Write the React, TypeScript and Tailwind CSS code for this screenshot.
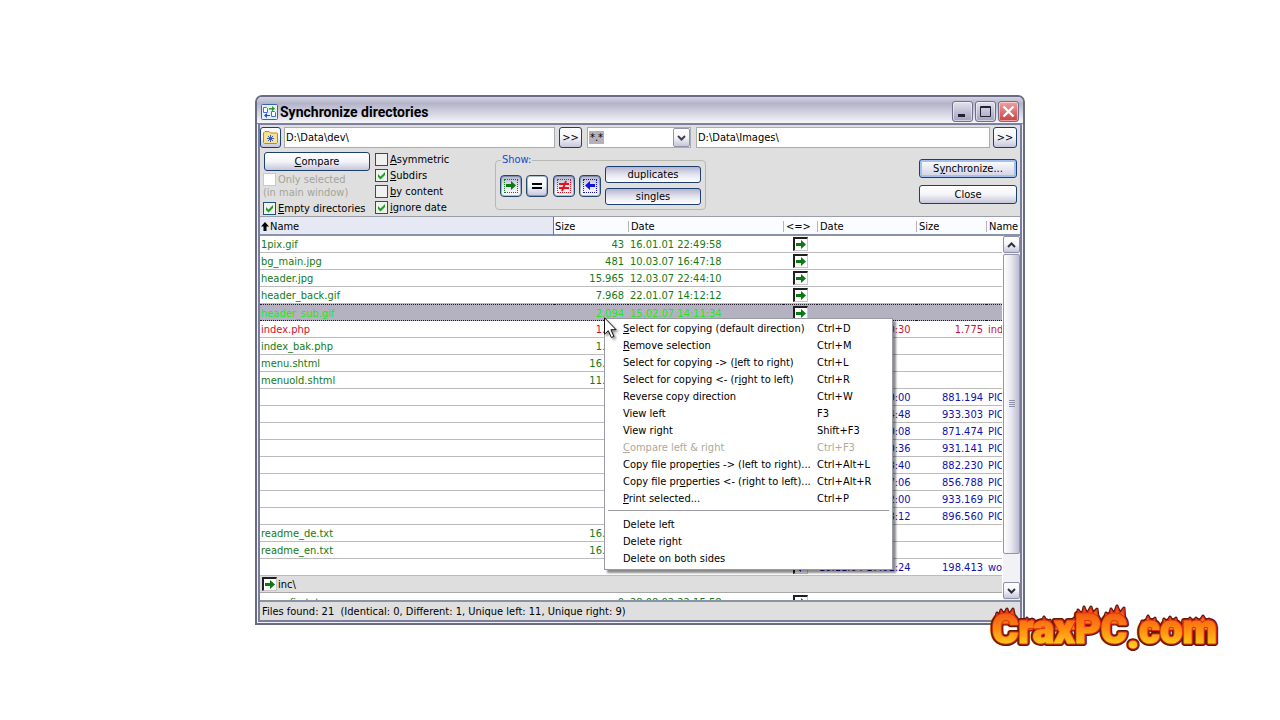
import type { ReactNode } from "react";

type Tone = "left" | "right" | "diff";

interface Entry {
  name?: string;
  size?: string;
  date?: string;
  dir?: "left" | "right" | "differs";
  rDate?: string;
  rSize?: string;
  rName?: string;
  tone: Tone;
  selected?: boolean;
}

const entries: Entry[] = [
  { name: "1pix.gif", size: "43", date: "16.01.01 22:49:58", dir: "right", tone: "left" },
  { name: "bg_main.jpg", size: "481", date: "10.03.07 16:47:18", dir: "right", tone: "left" },
  { name: "header.jpg", size: "15.965", date: "12.03.07 22:44:10", dir: "right", tone: "left" },
  { name: "header_back.gif", size: "7.968", date: "22.01.07 14:12:12", dir: "right", tone: "left" },
  { name: "header_sub.gif", size: "2.094", date: "15.02.07 14:11:34", dir: "right", tone: "left", selected: true },
  { name: "index.php", size: "1.775", date: "12.03.07 22:50:10", dir: "differs", rDate: "12.03.07 22:40:30", rSize: "1.775", rName: "index.php", tone: "diff" },
  { name: "index_bak.php", size: "1.775", date: "12.03.07 22:50:10", dir: "right", tone: "left" },
  { name: "menu.shtml", size: "16.210", date: "12.03.07 22:50:10", dir: "right", tone: "left" },
  { name: "menuold.shtml", size: "11.342", date: "12.03.07 22:50:10", dir: "right", tone: "left" },
  { dir: "left", rDate: "18.11.04 17:20:00", rSize: "881.194", rName: "PICT0001.jpg", tone: "right" },
  { dir: "left", rDate: "18.11.04 17:24:48", rSize: "933.303", rName: "PICT0002.jpg", tone: "right" },
  { dir: "left", rDate: "18.11.04 17:20:08", rSize: "871.474", rName: "PICT0003.jpg", tone: "right" },
  { dir: "left", rDate: "18.11.04 17:20:36", rSize: "931.141", rName: "PICT0004.jpg", tone: "right" },
  { dir: "left", rDate: "18.11.04 17:23:40", rSize: "882.230", rName: "PICT0005.jpg", tone: "right" },
  { dir: "left", rDate: "18.11.04 17:27:06", rSize: "856.788", rName: "PICT0006.jpg", tone: "right" },
  { dir: "left", rDate: "18.11.04 17:22:00", rSize: "933.169", rName: "PICT0007.jpg", tone: "right" },
  { dir: "left", rDate: "18.11.04 17:23:12", rSize: "896.560", rName: "PICT0008.jpg", tone: "right" },
  { name: "readme_de.txt", size: "16.004", date: "12.03.07 22:50:10", dir: "right", tone: "left" },
  { name: "readme_en.txt", size: "16.004", date: "12.03.07 22:50:10", dir: "right", tone: "left" },
  { dir: "left", rDate: "18.11.04 17:01:24", rSize: "198.413", rName: "world.jpg", tone: "right" },
];

const toneClass: Record<Tone, string> = {
  left: "text-[#157a15]",
  right: "text-[#1010b0]",
  diff: "text-[#d01030]",
};

function Arrow({ color, flip }: { color: string; flip?: boolean }) {
  return (
    <svg viewBox="0 0 12 9" className="h-[9px] w-[12px]">
      {flip ? <path d="M11 3H6V0L1 4.500 6 9V6h5z" fill={color} /> : <path d="M1 3h5V0l5 4.500L6 9V6H1z" fill={color} />}
    </svg>
  );
}

function DirectionBox({ dir }: { dir: "left" | "right" | "differs" }) {
  return (
    <span className="flex h-[14px] w-[15px] items-center justify-center border border-t-2 border-l-2 border-[#c8c8c8] border-t-[#202020] border-l-[#202020] bg-white">
      {dir === "right" && <Arrow color="#0a7a12" />}
      {dir === "left" && <Arrow color="#1414e0" flip />}
      {dir === "differs" && <NotEqual />}
    </span>
  );
}

function NotEqual() {
  return (
    <svg viewBox="0 0 12 12" className="h-[12px] w-[12px]">
      <path d="M1 4h10M1 8h10M8 1 4 11" stroke="#e8101c" strokeWidth="2" fill="none" />
    </svg>
  );
}

function Check({ label, hot, checked, disabled }: { label: string; hot?: string; checked?: boolean; disabled?: boolean }) {
  return (
    <label className={disabled ? "flex h-4 items-center gap-[2px] text-[#a5a597]" : "flex h-4 items-center gap-[2px]"}>
      <span className="grid h-[13px] w-[13px] place-items-center">
        <input
          type="checkbox"
          defaultChecked={checked}
          disabled={disabled}
          className="peer col-start-1 row-start-1 h-[13px] w-[13px] appearance-none border border-[#1c5180] bg-[#f1f1f1] disabled:border-[#cacac2] disabled:bg-white"
        />
        <svg viewBox="0 0 13 13" className="pointer-events-none invisible col-start-1 row-start-1 h-[13px] w-[13px] peer-checked:visible">
          <path d="M3 5v3l2.500 2.500L10 6V3L5.500 7.500z" fill="#21a121" />
        </svg>
      </span>
      <Hot text={label} hot={hot} />
    </label>
  );
}

function Hot({ text, hot }: { text: string; hot?: string }) {
  const at = hot ? text.indexOf(hot) : -1;
  if (at < 0) return <span>{text}</span>;
  return (
    <span>
      {text.slice(0, at)}
      <u className="underline-offset-1">{text.charAt(at)}</u>
      {text.slice(at + 1)}
    </span>
  );
}

function PushButton({ children, className }: { children: ReactNode; className: string }) {
  return (
    <button type="button" className={`flex items-center justify-center rounded-[3px] border border-[#1d3f70] ${className}`}>
      {children}
    </button>
  );
}

const face = "bg-gradient-to-b from-white via-[#f4f4fa] to-[#c6c6da]";
const pressed = "bg-gradient-to-b from-[#b4b4cc] via-[#e4e4f0] to-white";
const toggle = "grid h-[22px] w-[22px] place-items-center rounded-[4px] border border-[#24476e] shadow-[inset_0_0_0_1px_rgba(36,71,110,0.35)]";
const field = "h-[21px] border border-[#a5acb2] bg-white px-px outline-none";

const menu: { text: string; at?: number; keys?: string; off?: boolean }[][] = [
  [
    { text: "Select for copying (default direction)", at: 0, keys: "Ctrl+D" },
    { text: "Remove selection", at: 0, keys: "Ctrl+M" },
    { text: "Select for copying -> (left to right)", at: 23, keys: "Ctrl+L" },
    { text: "Select for copying <- (right to left)", at: 24, keys: "Ctrl+R" },
    { text: "Reverse copy direction", keys: "Ctrl+W" },
    { text: "View left", keys: "F3" },
    { text: "View right", keys: "Shift+F3" },
    { text: "Compare left & right", at: 0, keys: "Ctrl+F3", off: true },
    { text: "Copy file properties -> (left to right)...", at: 15, keys: "Ctrl+Alt+L" },
    { text: "Copy file properties <- (right to left)...", at: 12, keys: "Ctrl+Alt+R" },
    { text: "Print selected...", at: 0, keys: "Ctrl+P" },
  ],
  [{ text: "Delete left" }, { text: "Delete right" }, { text: "Delete on both sides" }],
];

function MenuText({ text, at }: { text: string; at?: number }) {
  if (at === undefined) return <span className="w-[194px]">{text}</span>;
  return (
    <span className="w-[194px]">
      {text.slice(0, at)}
      <u className="underline-offset-1">{text.charAt(at)}</u>
      {text.slice(at + 1)}
    </span>
  );
}

function ContextMenu() {
  return (
    <div role="menu" className="absolute top-[221px] left-[347px] w-[289px] border border-[#9a9aa6] bg-white pt-px pb-[2px] shadow-[3px_3px_2px_rgba(0,0,0,0.45)]">
      {menu.map((group, g) => (
        <div key={g}>
          {g > 0 && <hr className="mx-[3px] mt-[3px] mb-[5px] border-[#9a9aa0]" />}
          {group.map((item) => (
            <button
              key={item.text}
              type="button"
              role="menuitem"
              disabled={item.off}
              className="flex h-[17px] w-full items-center pl-[18px] text-left whitespace-nowrap disabled:text-[#aaaa9c]"
            >
              <MenuText text={item.text} at={item.at} />
              <span>{item.keys}</span>
            </button>
          ))}
        </div>
      ))}
    </div>
  );
}

function Pointer() {
  return (
    <svg viewBox="0 0 15 23" className="absolute top-[220px] left-[347px] h-[23px] w-[15px] drop-shadow-[2px_2px_1px_rgba(0,0,0,0.4)]">
      <path d="M.5.800v16.400l3.800-3.500 3 6.800 2.600-1.100-3-6.700h5.200z" fill="#fff" stroke="#111" />
    </svg>
  );
}

const flames =
  "M12 22l3-11 2 4 2-7 3 5 3-6 2 6 4-6 3 15zM38 28l1-10 3 4 3-6 2 5 3-4 1 11zM53 28l3-9 3 3 3-7 3 6 3-3 2 10zM73 28l1-10 4 5 2-5 2 10zM84 28l2-9 3 3 3-6 1 12zM95 22l1-14 4 5 2-8 3 7 4-7 2 6 4-4 2 15zM121 22l3-11 3 4 2-8 3 5 3-8 3 7 4-5 1 16zM157 28l3-9 3 2 3-7 3 6 4-4 2 12zM179 28l3-11 3 4 3-6 3 5 3-4 3 12zM200 28l1-10 4 4 3-6 3 5 3-5 3 4 4-6 3 5 3-2 2 11z";

function Watermark() {
  return (
    <svg viewBox="0 0 240 52" className="absolute -right-[199px] -bottom-[31px] h-[52px] w-[240px]" role="img" aria-label="CraxPC.com">
      <defs>
        <linearGradient id="fire" gradientUnits="userSpaceOnUse" x1="0" y1="8" x2="0" y2="46">
          <stop offset="0" stopColor="#ee5212" />
          <stop offset="0.450" stopColor="#ff8410" />
          <stop offset="1" stopColor="#ffd41a" />
        </linearGradient>
      </defs>
      <g strokeLinejoin="round" fontFamily="Roboto, sans-serif" fontWeight="900" fontSize="40">
        <path d={flames} fill="none" stroke="#64180a" strokeWidth="3" />
        <text x="10" y="41" fill="none" stroke="#64180a" strokeWidth="6">CraxPC<tspan dy="5">.</tspan><tspan dy="-5">com</tspan></text>
        <path d={flames} fill="url(#fire)" stroke="#d8281a" strokeWidth="1" />
        <text x="10" y="41" fill="none" stroke="#dc2c18" strokeWidth="3">CraxPC<tspan dy="5">.</tspan><tspan dy="-5">com</tspan></text>
        <text x="10" y="41" fill="url(#fire)" stroke="url(#fire)" strokeWidth="1">CraxPC<tspan dy="5">.</tspan><tspan dy="-5">com</tspan></text>
      </g>
    </svg>
  );
}

const th = "border-b-2 border-b-[#8a93a5] bg-[#fafcff] p-0 pt-px text-left font-normal";
const thInner = "block border-l border-[#b5b5b5] pl-[2px] leading-[11px]";

function FileList() {
  return (
    <div className="relative h-[384px] overflow-hidden border-t border-[#9a9ea8] bg-white">
      <table className="w-full table-fixed border-separate border-spacing-0 whitespace-nowrap">
        <colgroup>
          <col />
          <col className="w-[74px]" />
          <col className="w-[155px]" />
          <col className="w-[34px]" />
          <col className="w-[99px]" />
          <col className="w-[70px]" />
          <col className="w-[16px]" />
          <col className="w-[18px]" />
        </colgroup>
        <thead>
          <tr className="h-[19px]">
            <th className="border-r border-b-2 border-r-[#6e7488] border-b-[#8a93a5] bg-[#e6e9f4] p-0 pt-[2px] text-left font-normal">
              <span className="flex items-center gap-px pl-px">
                <svg viewBox="0 0 8 9" className="h-[9px] w-[8px]">
                  <path d="M4 0 0 4.500h2.500V9h3V4.500H8z" fill="#000" />
                </svg>
                Name
              </span>
            </th>
            <th className={`${th} pl-px`}>Size</th>
            <th className={th}><span className={thInner}>Date</span></th>
            <th className={th}><span className={thInner}>&lt;=&gt;</span></th>
            <th className={th}><span className={thInner}>Date</span></th>
            <th className={th}><span className={thInner}>Size</span></th>
            <th className={th} colSpan={2}><span className={thInner}>Name</span></th>
          </tr>
        </thead>
        <tbody>
          {entries.map((e, i) => {
            const base = e.selected
              ? "overflow-hidden border-y border-dotted border-[#201828] bg-[#b4b2c0] p-0"
              : "overflow-hidden border-b border-[#bcbcbc] p-0";
            const cell = e.selected ? `${base} pt-[2px] leading-[13px]` : `${base} pt-[2px] leading-[14px]`;
            return (
              <tr key={i} className={`h-[17px] ${e.selected ? "text-[#20e820]" : toneClass[e.tone]}`}>
                <td className={`${cell} pl-px`}>{e.name}</td>
                <td className={`${cell} pr-[4px] text-right`}>{e.size}</td>
                <td className={`${cell} pl-[2px]`}>{e.date}</td>
                <td className={`${base} pl-[10px]`}>{e.dir && <DirectionBox dir={e.dir} />}</td>
                <td className={`${cell} pl-[2px]`}>{e.rDate}</td>
                <td className={`${cell} pr-[3px] text-right`}>{e.rSize}</td>
                <td className={`${cell} pl-[2px]`}>{e.rName}</td>
                <td className="p-0" />
              </tr>
            );
          })}
          <tr className="h-[17px]">
            <td colSpan={7} className="border-b border-[#a8a8a8] bg-[#dedede] p-0">
              <span className="flex items-center gap-px pl-[2px]">
                <DirectionBox dir="right" />
                inc\
              </span>
            </td>
            <td className="p-0" />
          </tr>
          <tr className="h-[17px] text-[#157a15]">
            <td className="p-0 pt-[2px] pl-[12px]">config.txt</td>
            <td className="p-0 pt-[2px] pr-[4px] text-right">0</td>
            <td className="p-0 pt-[2px] pl-[2px]">28.08.02 22:15:58</td>
            <td className="p-0 pl-[10px]"><DirectionBox dir="right" /></td>
            <td colSpan={4} className="p-0" />
          </tr>
        </tbody>
      </table>
      <div className="absolute top-[19px] right-0 bottom-0 flex w-[17px] flex-col bg-[#f1f1f6]">
        <button type="button" aria-label="Scroll up" className={`grid h-[17px] place-items-center rounded-xs border border-[#8c90a8] ${face}`}>
          <svg viewBox="0 0 9 6" className="h-[6px] w-[9px]"><path d="M1 5l3.500-3.500L8 5" fill="none" stroke="#303038" strokeWidth="2" /></svg>
        </button>
        <div className="mt-px grid h-[300px] place-items-center rounded-xs border border-[#9296ac] bg-gradient-to-r from-white via-[#e6e6f0] to-[#bcbcd0]">
          <svg viewBox="0 0 6 8" className="h-[8px] w-[6px]"><path d="M0 .5h6M0 2.500h6M0 4.500h6M0 6.500h6" stroke="#8c90a8" /></svg>
        </div>
        <button type="button" aria-label="Scroll down" className={`mt-auto mb-px grid h-[17px] place-items-center rounded-xs border border-[#8c90a8] ${face}`}>
          <svg viewBox="0 0 9 6" className="h-[6px] w-[9px]"><path d="M1 1l3.500 3.500L8 1" fill="none" stroke="#303038" strokeWidth="2" /></svg>
        </button>
      </div>
    </div>
  );
}

function TitleBar() {
  const cap = "grid h-[21px] w-[21px] place-items-center rounded-[3px] border border-[#6d6f8c] shadow-[inset_0_0_0_1px_rgba(255,255,255,0.5)]";
  return (
    <header className="flex h-[27px] items-center gap-[2px] border-b border-[#84848e] bg-gradient-to-b from-[#d4d4e2] via-[#b4b4ca] via-25% to-[#f6f6fa] px-[4px] pt-[3px]">
      <svg viewBox="0 0 17 16" className="h-[16px] w-[17px]">
        <rect x=".5" y=".5" width="16" height="15" rx="1" fill="#e4eefc" stroke="#3e62a8" />
        <path d="M2.500 3.500h3l1 1v4h-4zM10.500 7.500h3l1 1v4h-4z" fill="#fff" stroke="#3d74d8" />
        <path d="M8 4h3V2l3 2.800L11 7.500V5.500H8z" fill="#2a9a2a" />
        <path d="M9 11H6V9l-3 2.500L6 14v-2h3z" fill="#2050d0" />
      </svg>
      <h1 className="flex-1 font-[Roboto,sans-serif] text-[14px] leading-4 font-bold">Synchronize directories</h1>
      <div className="flex gap-[2px]">
        <button type="button" aria-label="Minimize" className={`${cap} bg-gradient-to-b from-[#e2e2ee] to-[#a2a2bc]`}>
          <svg viewBox="0 0 13 13" className="h-[13px] w-[13px]"><path d="M2 9h7v3H2z" fill="#202038" /></svg>
        </button>
        <button type="button" aria-label="Maximize" className={`${cap} bg-gradient-to-b from-[#e2e2ee] to-[#a2a2bc]`}>
          <svg viewBox="0 0 13 13" className="h-[13px] w-[13px]"><path d="M1.500 1.500h10v10h-10zM1 2.500h11" fill="none" stroke="#202038" /></svg>
        </button>
        <button type="button" aria-label="Close window" className={`${cap} bg-gradient-to-b from-[#f0a0a0] to-[#cc3c44]`}>
          <svg viewBox="0 0 13 13" className="h-[13px] w-[13px]">
            <path d="M1.500 1.500l10 10M11.500 1.500l-10 10" stroke="#fff" strokeWidth="2.400" />
          </svg>
        </button>
      </div>
    </header>
  );
}

function PathBar() {
  return (
    <div className="flex items-center pt-[2px] pr-[3px]">
      <button type="button" aria-label="Favourite folders" className={`mr-[3px] grid h-[21px] w-[21px] place-items-center rounded-[3px] border border-[#1d3f70] ${face}`}>
        <svg viewBox="0 0 17 15" className="h-[15px] w-[17px]">
          <path d="M1.500 3 3 1.500h4L8.500 3H15l.5.500v9l-1 1h-12l-1-1z" fill="#fbe28e" stroke="#c08a18" />
          <path d="M8.500 5v7M5 8.500h7M6 6l5 5M11 6l-5 5" stroke="#3858b8" />
        </svg>
      </button>
      <input aria-label="Left directory" defaultValue={"D:\\Data\\dev\\"} className={`${field} mr-[4px] w-[271px]`} />
      <PushButton className={`mr-[5px] h-[21px] w-[23px] ${face}`}>&gt;&gt;</PushButton>
      <span className="mr-[5px] grid h-[21px] w-[104px] items-center border border-[#a5acb2] bg-white">
        <select aria-label="File mask" className="col-start-1 row-start-1 h-[19px] w-full appearance-none pl-[2px] text-transparent outline-none">
          <option>*.*</option>
        </select>
        <span aria-hidden="true" className="pointer-events-none col-start-1 row-start-1 flex items-center justify-between">
          <span className="ml-px bg-[#b4b2b8] px-px leading-[13px]">*.*</span>
          <span className={`grid h-[19px] w-[17px] place-items-center rounded-xs border border-[#9296ac] ${face}`}>
            <svg viewBox="0 0 9 6" className="h-[6px] w-[9px]"><path d="M1 1l3.500 3.500L8 1" fill="none" stroke="#404048" strokeWidth="2" /></svg>
          </span>
        </span>
      </span>
      <input aria-label="Right directory" defaultValue={"D:\\Data\\Images\\"} className={`${field} mr-[3px] min-w-0 flex-1`} />
      <PushButton className={`h-[21px] w-[24px] ${face}`}>&gt;&gt;</PushButton>
    </div>
  );
}

function Options() {
  return (
    <div className="flex h-[68px] items-start pr-[3px]">
      <div className="mr-[6px] w-[109px] pt-[4px] pl-[3px]">
        <PushButton className={`ml-px h-[19px] w-[106px] ${face}`}><Hot text="Compare" hot="C" /></PushButton>
        <Check label="Only selected" disabled />
        <p className="h-[13px] leading-[11px] text-[#a5a597]">(in main window)</p>
        <div className="whitespace-nowrap"><Check label="Empty directories" hot="E" checked /></div>
      </div>
      <div className="w-[120px] pt-[3px]">
        <Check label="Asymmetric" hot="A" />
        <Check label="Subdirs" hot="S" checked />
        <Check label="by content" hot="b" />
        <Check label="ignore date" hot="i" checked />
      </div>
      <fieldset className="mt-[6px] h-[56px] w-[211px] rounded-[4px] border border-[#b8b8b2] px-[4px]">
        <legend className="ml-px px-px leading-[12px] text-[#1a48c8]">Show:</legend>
        <div className="flex items-center justify-between">
          <button type="button" aria-label="Show left to right" className={`${toggle} ${pressed}`}>
            <span className="grid h-[14px] w-[14px] place-items-center border border-dotted border-[#107a20]"><Arrow color="#0a7a12" /></span>
          </button>
          <button type="button" aria-label="Show equal" className={`${toggle} ${face}`}>
            <svg viewBox="0 0 10 8" className="h-[8px] w-[10px]"><path d="M0 1h10v2H0zM0 5h10v2H0z" fill="#000" /></svg>
          </button>
          <button type="button" aria-label="Show different" className={`${toggle} ${pressed}`}>
            <span className="grid h-[14px] w-[14px] place-items-center border border-dotted border-[#e8101c]"><NotEqual /></span>
          </button>
          <button type="button" aria-label="Show right to left" className={`${toggle} ${pressed}`}>
            <span className="grid h-[14px] w-[14px] place-items-center border border-dotted border-[#1414e0]"><Arrow color="#1414e0" flip /></span>
          </button>
          <div className="grid gap-[5px]">
            <PushButton className={`h-[17px] w-[96px] ${pressed}`}>duplicates</PushButton>
            <PushButton className={`h-[17px] w-[96px] ${pressed}`}>singles</PushButton>
          </div>
        </div>
      </fieldset>
      <div className="ml-auto grid gap-[7px] pt-[11px]">
        <PushButton className="h-[19px] w-[98px] bg-gradient-to-b from-white to-[#d2d2e2] shadow-[inset_0_0_0_2px_#a4c0f0]"><Hot text="Synchronize..." hot="y" /></PushButton>
        <PushButton className={`h-[19px] w-[98px] ${face}`}>Close</PushButton>
      </div>
    </div>
  );
}

export default function App() {
  return (
    <main className="flex min-h-screen items-start justify-center bg-white pt-[95px] font-['DejaVu_Sans_Condensed','DejaVu_Sans',sans-serif] text-[11px] leading-[15px] text-black">
      <section className="relative w-full max-w-[770px] rounded-t-[7px] border-2 border-[#6a6c84] bg-[#f0f0f6]">
        <div className="overflow-hidden rounded-t-[5px]">
          <TitleBar />
          <div className="mx-px mb-px border-2 border-t border-[#7a7e9c] bg-[#dfdfdf]">
            <PathBar />
            <Options />
            <FileList />
            <footer className="h-[20px] border-t-2 border-[#8a93a5] pl-[2px] leading-[19px] whitespace-pre">
              Files found: 21  (Identical: 0, Different: 1, Unique left: 11, Unique right: 9)
            </footer>
          </div>
        </div>
        <ContextMenu />
        <Pointer />
        <Watermark />
      </section>
    </main>
  );
}
